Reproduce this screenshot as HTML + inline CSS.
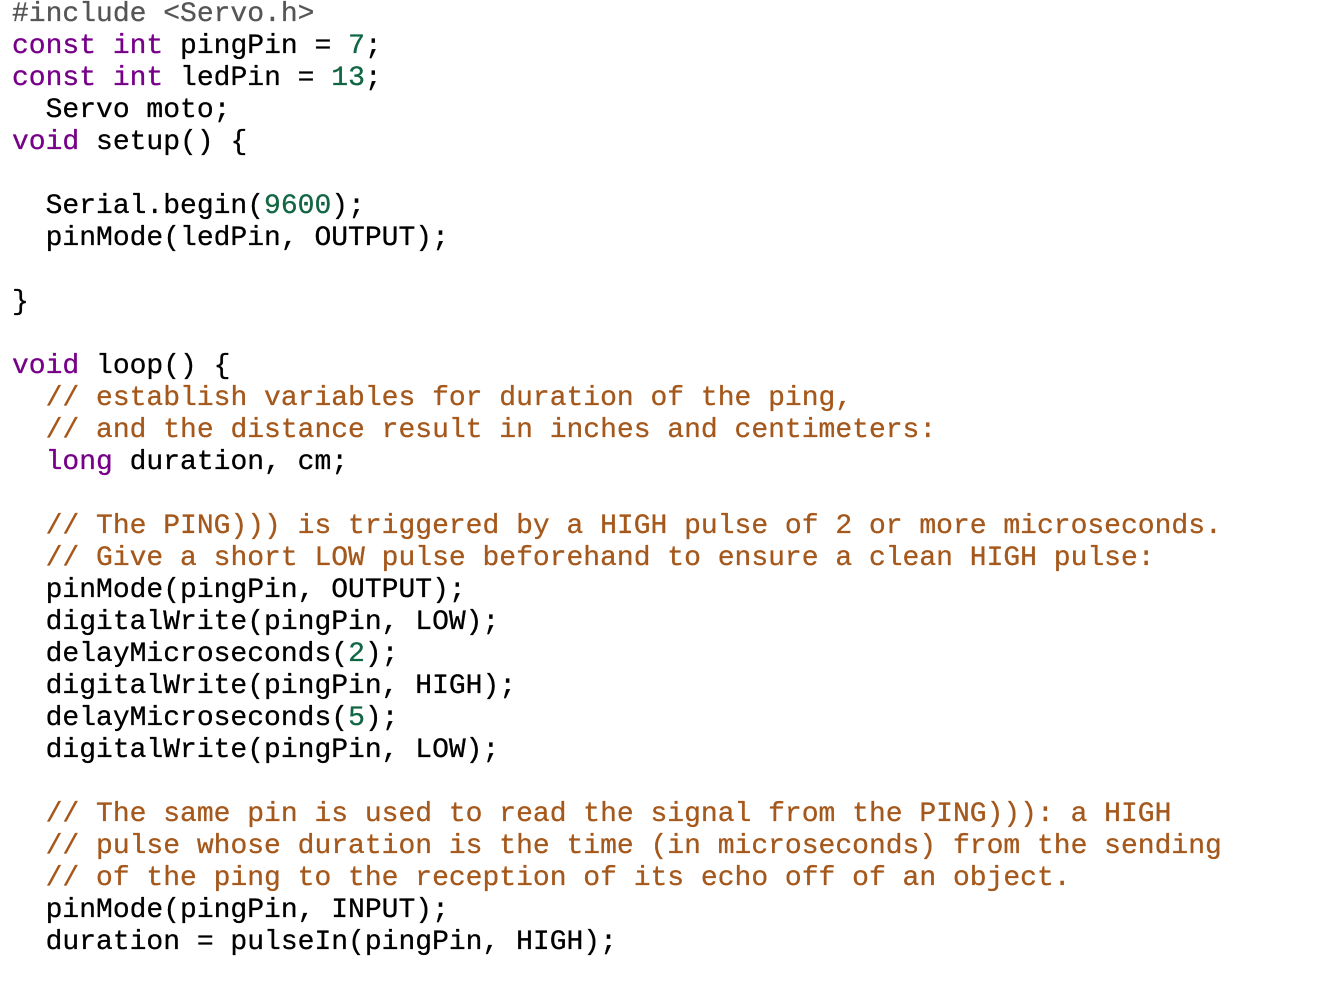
<!DOCTYPE html>
<html><head><meta charset="utf-8"><style>
html,body{margin:0;padding:0;background:#fff;width:1334px;height:986px;overflow:hidden}
pre{margin:0;position:absolute;left:12px;top:-1px;font-family:"Liberation Mono",monospace;font-size:28px;line-height:32px;color:#000;-webkit-text-stroke:0.3px currentColor}
.m{color:#555}.k{color:#770088}.n{color:#116644}.c{color:#a5581c}
</style></head><body><pre><span class="m">#include &lt;Servo.h&gt;</span>
<span class="k">const</span> <span class="k">int</span> pingPin = <span class="n">7</span>;
<span class="k">const</span> <span class="k">int</span> ledPin = <span class="n">13</span>;
  Servo moto;
<span class="k">void</span> setup() {

  Serial.begin(<span class="n">9600</span>);
  pinMode(ledPin, OUTPUT);

}

<span class="k">void</span> loop() {
  <span class="c">// establish variables for duration of the ping,</span>
  <span class="c">// and the distance result in inches and centimeters:</span>
  <span class="k">long</span> duration, cm;

  <span class="c">// The PING))) is triggered by a HIGH pulse of 2 or more microseconds.</span>
  <span class="c">// Give a short LOW pulse beforehand to ensure a clean HIGH pulse:</span>
  pinMode(pingPin, OUTPUT);
  digitalWrite(pingPin, LOW);
  delayMicroseconds(<span class="n">2</span>);
  digitalWrite(pingPin, HIGH);
  delayMicroseconds(<span class="n">5</span>);
  digitalWrite(pingPin, LOW);

  <span class="c">// The same pin is used to read the signal from the PING))): a HIGH</span>
  <span class="c">// pulse whose duration is the time (in microseconds) from the sending</span>
  <span class="c">// of the ping to the reception of its echo off of an object.</span>
  pinMode(pingPin, INPUT);
  duration = pulseIn(pingPin, HIGH);
</pre></body></html>
